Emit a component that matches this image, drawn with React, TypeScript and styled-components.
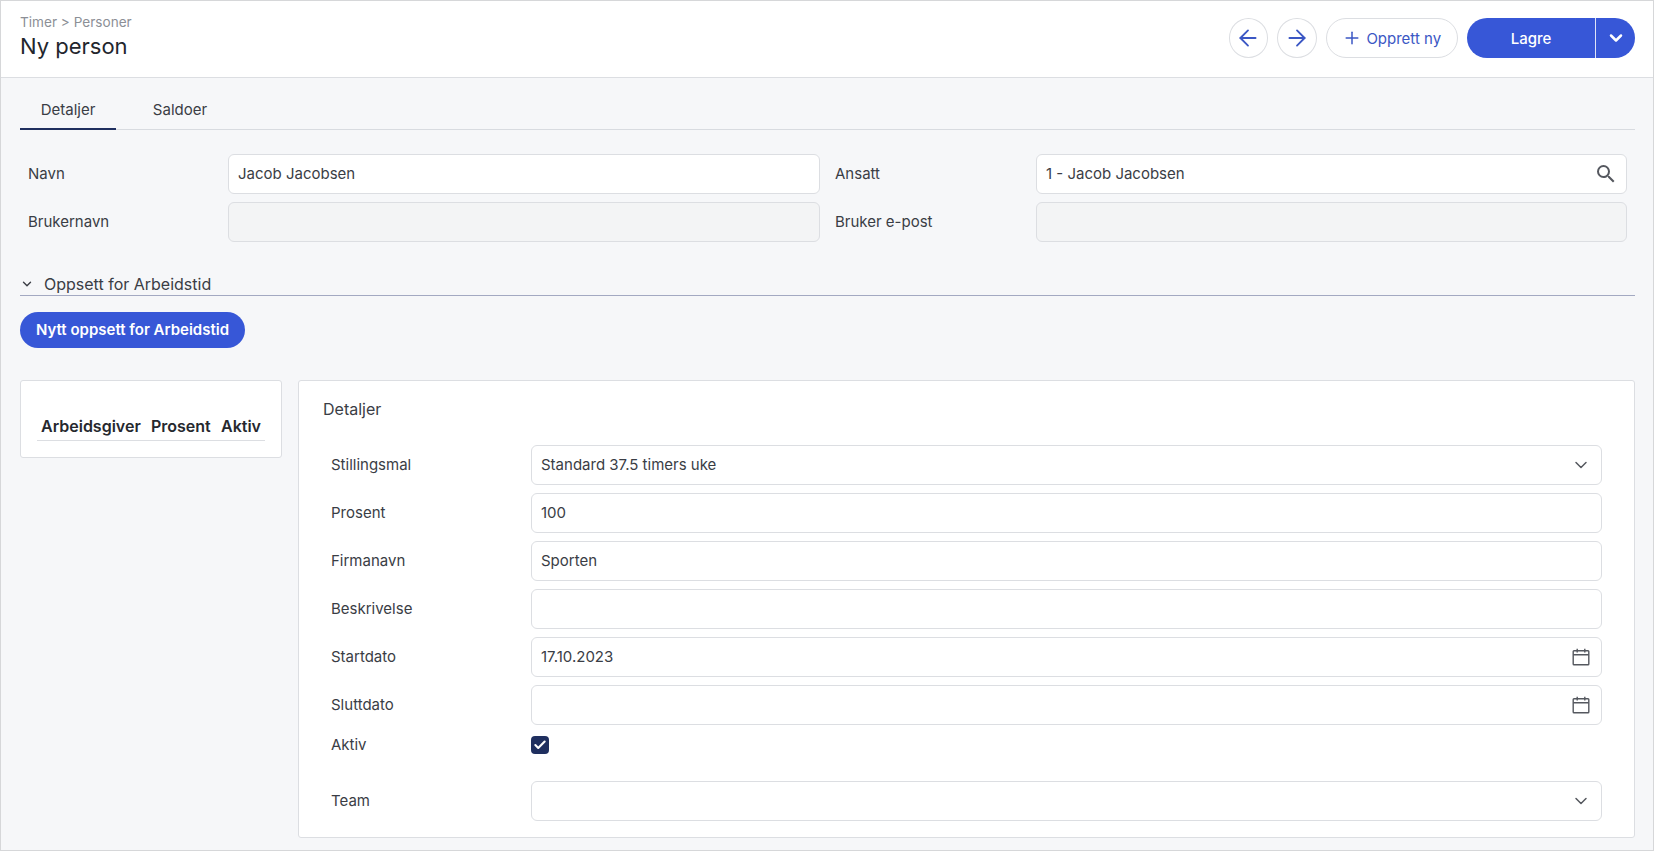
import styled, { createGlobalStyle } from 'styled-components'
import { ArrowLeft, ArrowRight, Check, ChevronDown, Plus } from 'lucide-react'
import { MdSearch } from 'react-icons/md'

const GlobalStyle = createGlobalStyle`
  html, body {
    margin: 0;
    padding: 0;
  }
  * {
    box-sizing: border-box;
  }
  body {
    font-family: Inter, "Liberation Sans", sans-serif;
    font-size: 15px;
    color: #3a3d45;
    background: #f6f7f9;
  }
`

const Page = styled.div`
  width: 1654px;
  height: 851px;
  border: 1px solid #d6d7d9;
  background: #f6f7f9;
  overflow: hidden;
`
const Header = styled.header`
  height: 77px;
  background: #fff;
  border-bottom: 1px solid #dcdee2;
  padding: 0 18px 2px 19px;
  display: flex;
  align-items: center;
  justify-content: space-between;
`
const TitleBlock = styled.div`
  margin-bottom: 4px;
`
const Breadcrumb = styled.div`
  font-size: 13.6px;
  line-height: 16px;
  color: #8c8f96;
`
const Title = styled.h1`
  margin: 3px 0 0;
  font-size: 22px;
  line-height: 26px;
  font-weight: 400;
  color: #23262d;
`
const Actions = styled.div`
  display: flex;
  align-items: center;
  gap: 9px;
`
const RoundButton = styled.button`
  width: 39.5px;
  height: 40px;
  padding: 0;
  border: 1px solid #dcdee2;
  border-radius: 50%;
  background: #fff;
  color: #3b57c4;
  display: flex;
  align-items: center;
  justify-content: center;
`
const OutlineButton = styled.button`
  width: 132.5px;
  height: 40px;
  padding: 0;
  border: 1px solid #dcdee2;
  border-radius: 20px;
  background: #fff;
  color: #3b57c4;
  font: inherit;
  display: flex;
  align-items: center;
  justify-content: center;
  gap: 4px;
`
const SaveGroup = styled.div`
  display: flex;
  width: 168px;
  height: 40px;
  border-radius: 20px;
  overflow: hidden;
  background: #3757d7;
`
const SaveButton = styled.button`
  flex: 1;
  border: 0;
  background: none;
  color: #fff;
  font: inherit;
  font-weight: 500;
`
const SaveToggle = styled.button`
  width: 40px;
  padding: 0;
  border: 0;
  border-left: 1px solid #dfe4f7;
  background: none;
  color: #fff;
  display: flex;
  align-items: center;
  justify-content: center;
`
const Content = styled.main`
  padding: 0 18px 0 19px;
`
const Tabs = styled.nav`
  display: flex;
  gap: 16px;
  height: 52px;
  border-bottom: 1px solid #d8dbe0;
`
const Tab = styled.div<{ $active?: boolean }>`
  width: 96px;
  height: 52px;
  padding-top: 23px;
  line-height: 18px;
  text-align: center;
  color: #3a3d45;
  border-bottom: 2px solid ${p => (p.$active ? '#1f2f5f' : 'transparent')};
`
const FormGrid = styled.section`
  display: grid;
  grid-template-columns: 800px 792px;
  column-gap: 15px;
  row-gap: 8px;
  margin-top: 24px;
`
const Pair = styled.div<{ $label: number; $inset?: number }>`
  display: grid;
  grid-template-columns: ${p => p.$label}px 1fr;
  align-items: center;
  padding-left: ${p => p.$inset ?? 0}px;
`
const Label = styled.label`
  color: #3a3d45;
  line-height: 18px;
`
const InputBox = styled.div<{ $disabled?: boolean }>`
  height: 40px;
  padding: 0 10px 1px 9px;
  border: 1px solid #dcdee2;
  border-radius: 6px;
  background: ${p => (p.$disabled ? '#f3f4f5' : '#fff')};
  color: #3a3d45;
  display: flex;
  align-items: center;
  justify-content: space-between;
  svg {
    color: #55585f;
    flex: none;
  }
`
const SearchIcon = styled(MdSearch)`
  margin-right: -2px;
`
const SectionHeader = styled.div`
  margin-top: 30px;
  height: 24px;
  display: flex;
  align-items: center;
  gap: 10px;
  border-bottom: 1px solid #a3a9c2;
  font-size: 16px;
  svg {
    color: #3a3d45;
  }
`
const PrimaryButton = styled.button`
  display: block;
  margin-top: 16px;
  width: 225px;
  height: 36px;
  padding: 0 0 1px;
  border: 0;
  border-radius: 18px;
  background: #3757d7;
  color: #fff;
  font: inherit;
  font-weight: 600;
`
const Columns = styled.div`
  display: flex;
  align-items: flex-start;
  gap: 16px;
  margin-top: 32px;
`
const Card = styled.div`
  background: #fff;
  border: 1px solid #dcdee2;
  border-radius: 3px;
`
const ListCard = styled(Card)`
  width: 262px;
  height: 78px;
  padding: 35px 16px 0;
`
const ListHead = styled.div`
  display: flex;
  justify-content: space-between;
  padding: 0 4px 0 4px;
  height: 25px;
  font-size: 16px;
  line-height: 20px;
  font-weight: 600;
  color: #26282e;
  border-bottom: 1px solid #dcdee2;
`
const DetailCard = styled(Card)`
  width: 1337px;
  height: 458px;
  padding: 20px 32px 0 24px;
`
const CardTitle = styled.div`
  font-size: 16px;
  line-height: 17px;
  color: #3a3d45;
`
const Rows = styled.div`
  margin-top: 27px;
  padding-left: 8px;
  display: flex;
  flex-direction: column;
  gap: 8px;
`
const Row = styled.div`
  display: grid;
  grid-template-columns: 200px 1fr;
  align-items: center;
`
const CheckRow = styled(Row)`
  height: 18px;
  margin-top: 3px;
  margin-bottom: 19px;
`
const CheckBox = styled.span`
  width: 18px;
  height: 18px;
  border-radius: 4px;
  background: #1f2f5f;
  color: #fff;
  display: flex;
  align-items: center;
  justify-content: center;
`

const fields = [
  { label: 'Prosent', value: '100' },
  { label: 'Firmanavn', value: 'Sporten' },
  { label: 'Beskrivelse', value: '' },
]

function CalendarIcon() {
  return (
    <svg width="20" height="20" viewBox="0 0 20 20" fill="none" stroke="currentColor" strokeWidth="1.4">
      <rect x="2.2" y="3.7" width="15.6" height="14" rx="0.8" />
      <path d="M2.2 7.7h15.6M6.2 1.8v3.6M13.8 1.8v3.6" />
    </svg>
  )
}

function App() {
  return (
    <Page>
      <GlobalStyle />
      <Header>
        <TitleBlock>
          <Breadcrumb>Timer &gt; Personer</Breadcrumb>
          <Title>Ny person</Title>
        </TitleBlock>
        <Actions>
          <RoundButton><ArrowLeft size={26} strokeWidth={1.7} /></RoundButton>
          <RoundButton><ArrowRight size={26} strokeWidth={1.7} /></RoundButton>
          <OutlineButton><Plus size={20} strokeWidth={1.8} />Opprett ny</OutlineButton>
          <SaveGroup>
            <SaveButton>Lagre</SaveButton>
            <SaveToggle><ChevronDown size={20} strokeWidth={3} /></SaveToggle>
          </SaveGroup>
        </Actions>
      </Header>
      <Content>
        <Tabs>
          <Tab $active>Detaljer</Tab>
          <Tab>Saldoer</Tab>
        </Tabs>
        <FormGrid>
          <Pair $label={200} $inset={8}>
            <Label>Navn</Label>
            <InputBox>Jacob Jacobsen</InputBox>
          </Pair>
          <Pair $label={201}>
            <Label>Ansatt</Label>
            <InputBox>1 - Jacob Jacobsen<SearchIcon size={24} /></InputBox>
          </Pair>
          <Pair $label={200} $inset={8}>
            <Label>Brukernavn</Label>
            <InputBox $disabled />
          </Pair>
          <Pair $label={201}>
            <Label>Bruker e-post</Label>
            <InputBox $disabled />
          </Pair>
        </FormGrid>
        <SectionHeader>
          <ChevronDown size={14} strokeWidth={2.4} />
          Oppsett for Arbeidstid
        </SectionHeader>
        <PrimaryButton>Nytt oppsett for Arbeidstid</PrimaryButton>
        <Columns>
          <ListCard>
            <ListHead>
              <span>Arbeidsgiver</span>
              <span>Prosent</span>
              <span>Aktiv</span>
            </ListHead>
          </ListCard>
          <DetailCard>
            <CardTitle>Detaljer</CardTitle>
            <Rows>
              <Row>
                <Label>Stillingsmal</Label>
                <InputBox>Standard 37.5 timers uke<ChevronDown size={20} strokeWidth={1.8} /></InputBox>
              </Row>
              {fields.map(f => (
                <Row key={f.label}>
                  <Label>{f.label}</Label>
                  <InputBox>{f.value}</InputBox>
                </Row>
              ))}
              <Row>
                <Label>Startdato</Label>
                <InputBox>17.10.2023<CalendarIcon /></InputBox>
              </Row>
              <Row>
                <Label>Sluttdato</Label>
                <InputBox><span /><CalendarIcon /></InputBox>
              </Row>
              <CheckRow>
                <Label>Aktiv</Label>
                <CheckBox><Check size={14} strokeWidth={3.6} /></CheckBox>
              </CheckRow>
              <Row>
                <Label>Team</Label>
                <InputBox><span /><ChevronDown size={20} strokeWidth={1.8} /></InputBox>
              </Row>
            </Rows>
          </DetailCard>
        </Columns>
      </Content>
    </Page>
  )
}

export default App
